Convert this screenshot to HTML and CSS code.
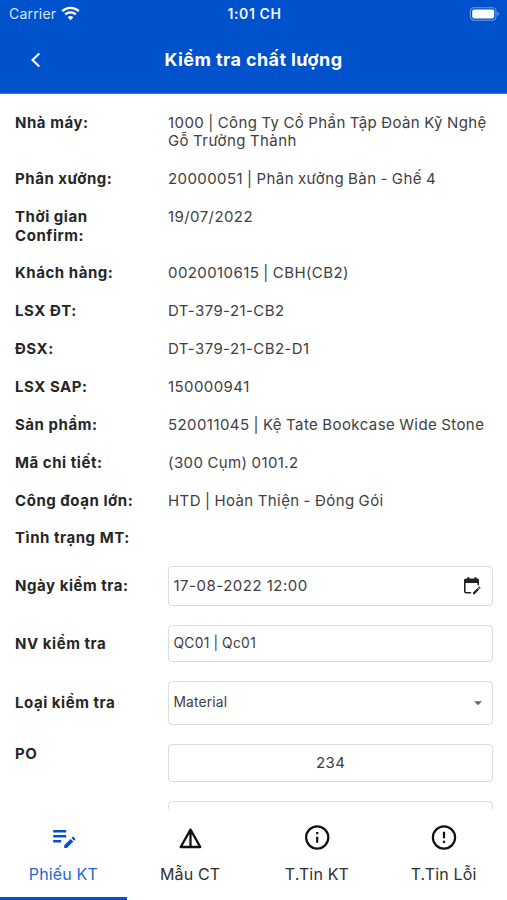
FILE: index.html
```html
<!DOCTYPE html>
<html lang="vi">
<head>
<meta charset="utf-8">
<title>Kiểm tra chất lượng</title>
<link rel="stylesheet" href="styles.css">
</head>
<body>
<div class="app">
  <header class="top">
    <div class="status">
      <div class="carrier"><span>Carrier</span>
        <svg class="wifi" width="19" height="15" viewBox="0 0 19 15"><path d="M9.5 14.2 6.6 11.2a4.3 4.3 0 0 1 5.8 0z" fill="#fff"/><path d="M1.2 5.2a12 12 0 0 1 16.6 0M4.2 8.4a7.7 7.7 0 0 1 10.6 0" fill="none" stroke="#fff" stroke-width="2.3"/></svg>
      </div>
      <div class="clock">1:01 CH</div>
      <svg class="battery" width="31" height="16" viewBox="0 0 31 16"><rect x="1.4" y="1.8" width="25.6" height="12.4" rx="3.6" fill="none" stroke="#6f9de9" stroke-width="1.1"/><rect x="3.2" y="3.6" width="22" height="8.8" rx="1.8" fill="#fff"/><path d="M28.5 5.8q3 2.2 0 4.4z" fill="#6f9de9"/></svg>
    </div>
    <div class="titlebar">
      <svg class="back" width="12" height="18" viewBox="0 0 12 18"><path d="M10.3 2.5 3.5 9l6.8 6.5" fill="none" stroke="#fff" stroke-width="2"/></svg>
      <h1>Kiểm tra chất lượng</h1>
    </div>
  </header>
  <main class="content">
    <dl class="info">
      <dt>Nhà máy:</dt><dd>1000 | Công Ty Cổ Phần Tập Đoàn Kỹ Nghệ<br>Gỗ Trường Thành</dd>
      <dt>Phân xưởng:</dt><dd>20000051 | Phân xưởng Bàn - Ghế 4</dd>
      <dt>Thời gian<br>Confirm:</dt><dd>19/07/2022</dd>
      <dt>Khách hàng:</dt><dd>0020010615 | CBH(CB2)</dd>
      <dt>LSX ĐT:</dt><dd>DT-379-21-CB2</dd>
      <dt>ĐSX:</dt><dd>DT-379-21-CB2-D1</dd>
      <dt>LSX SAP:</dt><dd>150000941</dd>
      <dt>Sản phẩm:</dt><dd>520011045 | Kệ Tate Bookcase Wide Stone</dd>
      <dt>Mã chi tiết:</dt><dd>(300 Cụm) 0101.2</dd>
      <dt>Công đoạn lớn:</dt><dd>HTD | Hoàn Thiện - Đóng Gói</dd>
      <dt>Tình trạng MT:</dt><dd></dd>
    </dl>
    <div class="form">
      <div class="row"><span class="label">Ngày kiểm tra:</span>
        <div class="box date"><span>17-08-2022 12:00</span>
          <svg width="18" height="18" viewBox="0 0 18 18"><path d="M3 1.5h1.2V.3h2.2v1.2h5V.3h2.2v1.2H14.5Q16 1.5 16 3v3H1V3Q1 1.5 3 1.5z" fill="#222"/><path d="M1.8 6v8.5q0 1.3 1.3 1.3h5M15.2 6v2.2" fill="none" stroke="#222" stroke-width="1.6"/><path d="m10 15.6 4.6-4.6 1.6 1.6-4.6 4.6H10zM15.1 10.5l1-1 1.6 1.6-1 1z" fill="#222"/></svg></div></div>
      <div class="row"><span class="label">NV kiểm tra</span><div class="box staff">QC01 | Qc01</div></div>
      <div class="row"><span class="label">Loại kiểm tra</span>
        <div class="box kind"><span>Material</span><svg width="10" height="6" viewBox="0 0 10 6"><path d="M1 1.2h8L5 5.2z" fill="#666"/></svg></div></div>
      <div class="row po"><span class="label">PO</span><div class="box order">234</div></div>
      <div class="row"><span class="label"></span><div class="box next"></div></div>
    </div>
  </main>
  <nav class="tabs">
    <div class="tab active"><svg width="28" height="28" viewBox="0 0 28 28"><path d="M4.2 7.3h13M4.2 12.3h13M4.2 17.3h8" fill="none" stroke="currentColor" stroke-width="2.4"/><path d="M15.2 24v-2.7l6.4-6.4 2.7 2.7-6.4 6.4zM22.5 14l.9-.9q.6-.6 1.2 0l1.5 1.5q.6.6 0 1.2l-.9.9z" fill="currentColor"/></svg><span>Phiếu KT</span></div>
    <div class="tab"><svg width="28" height="28" viewBox="0 0 28 28"><path d="M14.5 5.6 4.7 23h19.6zM14.5 5.8v17" fill="none" stroke="currentColor" stroke-width="2.3" stroke-linejoin="round"/></svg><span>Mẫu CT</span></div>
    <div class="tab"><svg width="28" height="28" viewBox="0 0 28 28"><circle cx="14.2" cy="13.5" r="11.1" fill="none" stroke="currentColor" stroke-width="2.2"/><path d="M14.2 12.7v6M14.2 8v2.3" stroke="currentColor" stroke-width="2.2"/></svg><span>T.Tin KT</span></div>
    <div class="tab"><svg width="28" height="28" viewBox="0 0 28 28"><circle cx="14" cy="13.5" r="11.1" fill="none" stroke="currentColor" stroke-width="2.2"/><path d="M14 7.7v6.6M14 16.8v2.3" stroke="currentColor" stroke-width="2.2"/></svg><span>T.Tin Lỗi</span></div>
  </nav>
</div>
</body>
</html>
```
FILE: styles.css
```css
* { box-sizing: border-box; }
body { margin: 0; background: #fff; color: #262626; font-family: Inter, "Liberation Sans", sans-serif; }
.app { width: 507px; height: 900px; overflow: hidden; display: flex; flex-direction: column; }
.top { height: 94px; flex: none; background: #0052cc; color: #fff; border-bottom: 1px solid #3d7ad9; }
.status { height: 28px; padding: 0 7px 0 9px; display: grid; grid-template-columns: 1fr auto 1fr; align-items: center; }
.carrier { display: flex; align-items: center; gap: 5px; font-size: 14px; letter-spacing: .2px; color: #d9e6fa; margin-top: -1px; }
.wifi { margin-top: -1px; }
.clock { font-size: 14px; font-weight: 600; letter-spacing: .6px; color: #edf3fd; margin-top: -1px; }
.battery { justify-self: end; margin-top: -1px; }
.titlebar { height: 65px; padding: 0 29px; display: grid; grid-template-columns: 12px 1fr 12px; align-items: center; margin-top: -1px; }
h1 { margin: 0; text-align: center; font-size: 18px; font-weight: 700; line-height: 24px; letter-spacing: .4px; }
.content { height: 715px; flex: none; overflow: hidden; padding: 20px 14px 0 15px; }
.info { margin: 0; display: grid; grid-template-columns: 153px 1fr; row-gap: 19.4px; font-size: 15px; line-height: 18.45px; white-space: nowrap; }
dt, .label { font-weight: 700; letter-spacing: .54px; }
dd { margin: 0; color: #404040; letter-spacing: .42px; word-spacing: -.6px; }
.form { display: flex; flex-direction: column; gap: 19px; margin-top: 18.15px; }
.row { display: grid; grid-template-columns: 152.5px 1fr; align-items: center; font-size: 15px; line-height: 19px; }
.po { align-items: start; }
.box { border: 1px solid #dcdcdc; border-radius: 4px; padding: 0 11px 0 5px; color: #404040; display: flex; align-items: center; justify-content: space-between; }
.date { height: 40px; letter-spacing: .5px; }
.staff { height: 37px; font-size: 13.8px; letter-spacing: .3px; word-spacing: -.4px; }
.kind { height: 44px; font-size: 13.8px; letter-spacing: .15px; padding-right: 9px; }
.order { height: 38px; justify-content: center; padding: 0 0 0 1px; letter-spacing: .5px; }
.next { height: 40px; }
.tabs { flex: 1; display: grid; grid-template-columns: repeat(4, 1fr); }
.tab { padding-top: 14.5px; display: flex; flex-direction: column; align-items: center; color: #111; border-bottom: 3px solid transparent; font-size: 16px; line-height: 20px; letter-spacing: .15px; }
.tab span { margin-top: 12px; color: #303030; }
.tab.active { color: #0052cc; border-bottom-color: #0052cc; }
.tab.active span { color: #2468d4; }
```
